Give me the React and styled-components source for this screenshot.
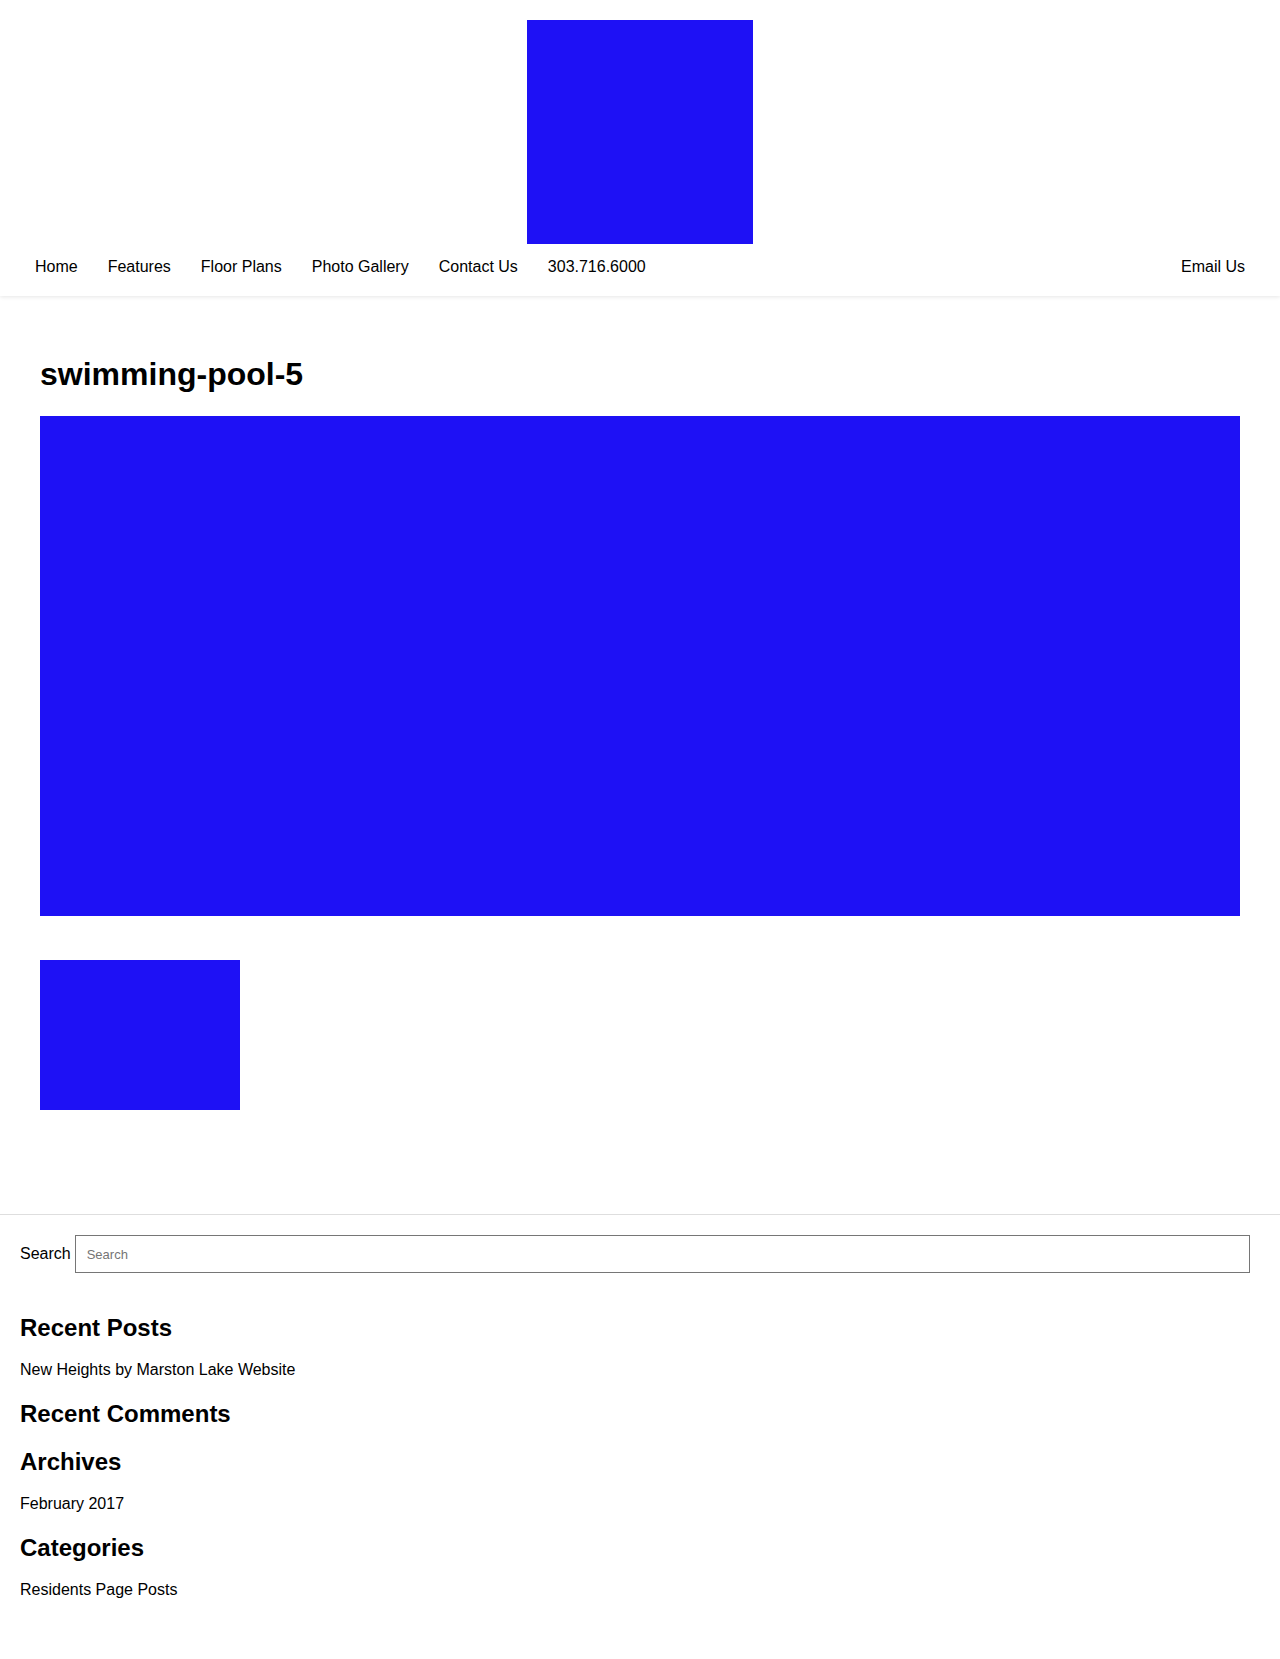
import React from 'react';
import styled, { createGlobalStyle } from 'styled-components';

const BLUE = '#1e11f5';

const GlobalStyle = createGlobalStyle`
  body {
    margin: 0;
    background: #fff;
    color: #000;
    font-family: 'Liberation Sans', Arial, sans-serif;
  }
  * {
    box-sizing: border-box;
  }
`;

const Header = styled.header`
  padding-top: 20px;
  background: #fff;
  box-shadow: 0 1px 4px rgba(0, 0, 0, 0.1);
  position: relative;
  z-index: 1;

  .header-logo {
    display: block;
    width: 226px;
    height: 224px;
    margin: 0 auto;
    background: ${BLUE};
  }
`;

const Nav = styled.nav`
  display: flex;
  align-items: center;
  padding: 11px 20px 17px;

  .nav-spacer {
    flex: 1;
  }
`;

const NavLink = styled.a`
  padding: 0 15px;
  font-size: 16px;
  line-height: 24px;
  color: #000;
  text-decoration: none;
  white-space: nowrap;
`;

const Main = styled.main`
  padding: 59px 40px 104px;

  .post-title {
    margin: 0 0 23px;
    font-size: 32px;
    line-height: 38px;
    font-weight: 700;
  }
`;

const Picture = styled.div`
  width: ${(p) => p.$w};
  height: ${(p) => p.$h}px;
  background: ${BLUE};
  margin-bottom: ${(p) => p.$mb || 0}px;
`;

const Footer = styled.footer`
  border-top: 1px solid #dedede;
  padding: 20px 20px 40px;
`;

const SearchForm = styled.form`
  display: flex;
  align-items: center;
  gap: 4px;
  padding-right: 10px;
  margin-bottom: 40px;

  label {
    font-size: 16px;
  }

  input {
    flex: 1;
    height: 38px;
    border: 1px solid #767676;
    border-radius: 0;
    padding: 0 11px;
    font-family: 'Liberation Sans', Arial, sans-serif;
    font-size: 13px;
    color: #000;
    outline: none;
  }
  input::placeholder {
    color: #757575;
  }
`;

const Widget = styled.section`
  padding-bottom: 17px;

  h2 {
    margin: 0 0 ${(p) => (p.$empty ? 2 : 16)}px;
    font-size: 24px;
    line-height: 29px;
    font-weight: 700;
  }

  ul {
    list-style: none;
    margin: 0;
    padding: 0;
  }

  li {
    font-size: 16px;
    line-height: 24px;
  }
`;

const widgets = [
  { title: 'Recent Posts', items: ['New Heights by Marston Lake Website'] },
  { title: 'Recent Comments', items: [] },
  { title: 'Archives', items: ['February 2017'] },
  { title: 'Categories', items: ['Residents Page Posts'] },
];

const navLinks = ['Home', 'Features', 'Floor Plans', 'Photo Gallery', 'Contact Us', '303.716.6000'];

function App() {
  return (
    <>
      <GlobalStyle />
      <Header>
        <div className="header-logo" />
        <Nav>
          {navLinks.map((l) => (
            <NavLink key={l} href="#">
              {l}
            </NavLink>
          ))}
          <div className="nav-spacer" />
          <NavLink href="#">Email Us</NavLink>
        </Nav>
      </Header>
      <Main>
        <h1 className="post-title">swimming-pool-5</h1>
        <Picture $w="100%" $h={500} $mb={44} />
        <Picture $w="200px" $h={150} />
      </Main>
      <Footer>
        <SearchForm onSubmit={(e) => e.preventDefault()}>
          <label htmlFor="s">Search</label>
          <input id="s" type="text" placeholder="Search" />
        </SearchForm>
        {widgets.map((w) => (
          <Widget key={w.title} $empty={!w.items.length}>
            <h2>{w.title}</h2>
            {w.items.length > 0 && (
              <ul>
                {w.items.map((i) => (
                  <li key={i}>{i}</li>
                ))}
              </ul>
            )}
          </Widget>
        ))}
      </Footer>
    </>
  );
}

export default App;
